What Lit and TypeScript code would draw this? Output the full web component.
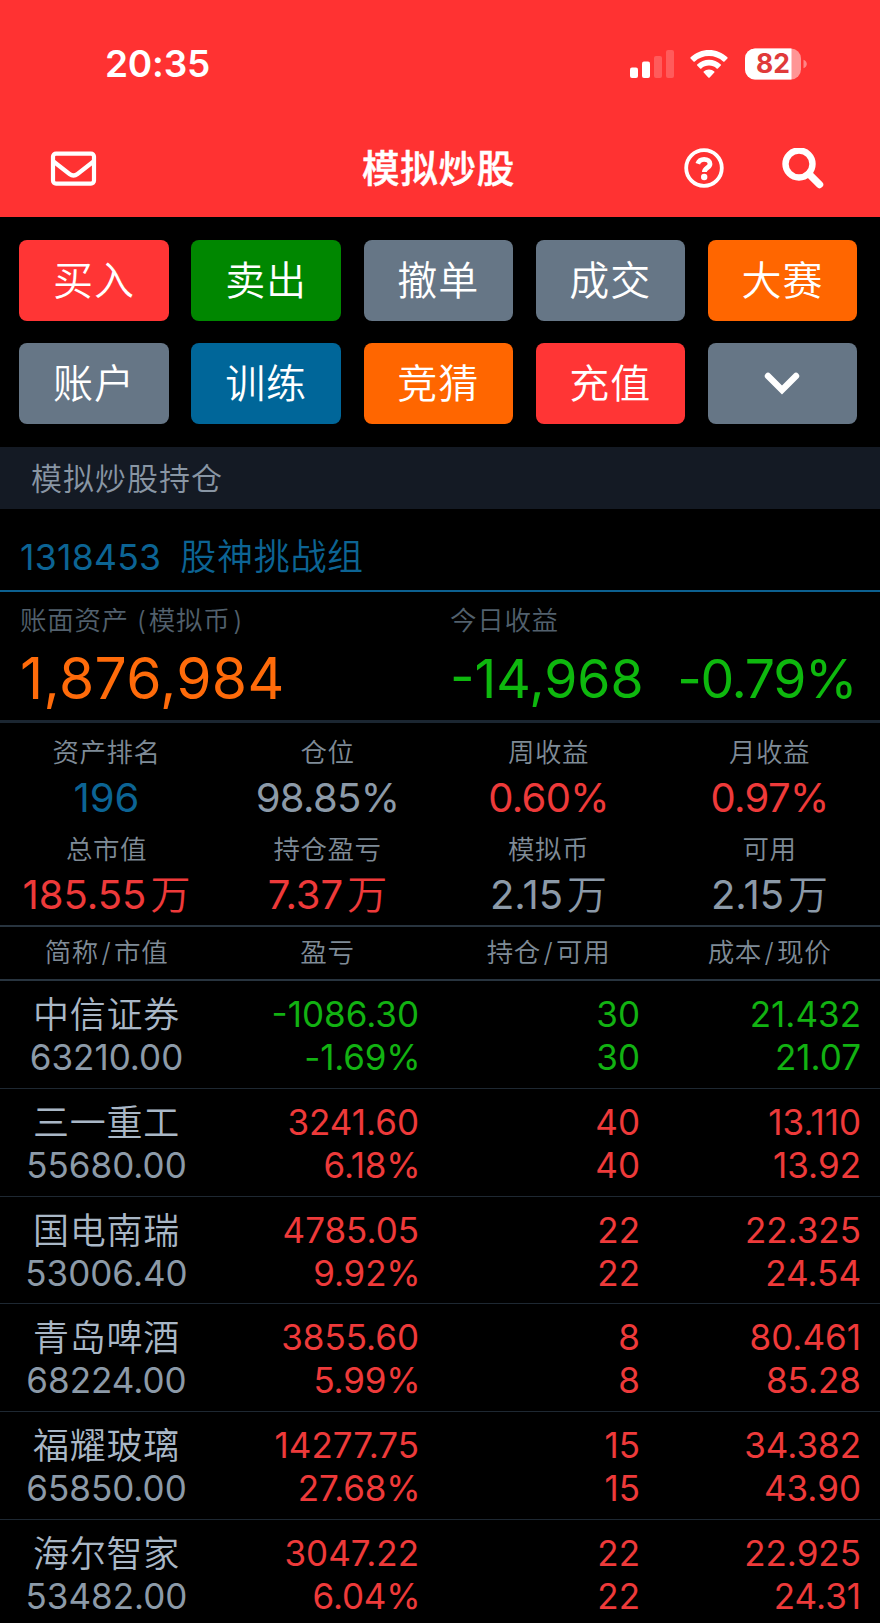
import { LitElement, html, css } from "lit";
import { customElement } from "lit/decorators.js";
import { classMap } from "lit/directives/class-map.js";

type Tone = "up" | "down" | "link" | "plain";

const actions = [
  { label: "买入", tone: "red" },
  { label: "卖出", tone: "green" },
  { label: "撤单", tone: "slate" },
  { label: "成交", tone: "slate" },
  { label: "大赛", tone: "orange" },
  { label: "账户", tone: "slate" },
  { label: "训练", tone: "blue" },
  { label: "竞猜", tone: "orange" },
  { label: "充值", tone: "red" },
  { label: "", tone: "slate" },
];

const stats: { label: string; value: string; unit?: string; tone: Tone }[] = [
  { label: "资产排名", value: "196", tone: "link" },
  { label: "仓位", value: "98.85%", tone: "plain" },
  { label: "周收益", value: "0.60%", tone: "up" },
  { label: "月收益", value: "0.97%", tone: "up" },
  { label: "总市值", value: "185.55", unit: "万", tone: "up" },
  { label: "持仓盈亏", value: "7.37", unit: "万", tone: "up" },
  { label: "模拟币", value: "2.15", unit: "万", tone: "plain" },
  { label: "可用", value: "2.15", unit: "万", tone: "plain" },
];

const columns = ["简称/市值", "盈亏", "持仓/可用", "成本/现价"];

const holdings = [
  { name: "中信证券", worth: "63210.00", gain: "-1086.30", rate: "-1.69%", held: "30", free: "30", cost: "21.432", price: "21.07" },
  { name: "三一重工", worth: "55680.00", gain: "3241.60", rate: "6.18%", held: "40", free: "40", cost: "13.110", price: "13.92" },
  { name: "国电南瑞", worth: "53006.40", gain: "4785.05", rate: "9.92%", held: "22", free: "22", cost: "22.325", price: "24.54" },
  { name: "青岛啤酒", worth: "68224.00", gain: "3855.60", rate: "5.99%", held: "8", free: "8", cost: "80.461", price: "85.28" },
  { name: "福耀玻璃", worth: "65850.00", gain: "14277.75", rate: "27.68%", held: "15", free: "15", cost: "34.382", price: "43.90" },
  { name: "海尔智家", worth: "53482.00", gain: "3047.22", rate: "6.04%", held: "22", free: "22", cost: "22.925", price: "24.31" },
];

@customElement("status-bar")
class StatusBar extends LitElement {
  static styles = css`
    :host { display: flex; align-items: center; height: 113px; padding: 7px 73px 0 105px; color: #fff; }
    .time { flex: 1; font-size: 37px; font-weight: 600; line-height: 44px; letter-spacing: -0.2px; padding-top: 1px; }
    svg { display: block; }
    .wifi { margin: 0 17px 0 15px; }
  `;
  render() {
    return html`
      <div class="time">20:35</div>
      <svg width="45" height="30" viewBox="0 0 45 30" fill="#fff">
        <rect x="0" y="18.500" width="8" height="10.500" rx="2" />
        <rect x="12" y="12.500" width="8" height="16.500" rx="2" />
        <rect x="24" y="7" width="8" height="22" rx="2" opacity=".2" />
        <rect x="36" y="1" width="8" height="28" rx="2" opacity=".2" />
      </svg>
      <svg class="wifi" width="38" height="30" viewBox="0 0 38 30" fill="#fff">
        <path d="M19 1C26 1 32.500 3.700 37.400 8.300Q38 9 37.400 9.600L34.500 12.400Q33.800 13 33.200 12.400C29.300 8.900 24.400 7 19 7S8.700 8.900 4.800 12.400Q4.200 13 3.500 12.400L.6 9.600Q0 9 .6 8.300C5.500 3.700 12 1 19 1Z" />
        <path d="M19 10.800C23.500 10.800 27.600 12.500 30.800 15.400Q31.400 16 30.800 16.600L27.900 19.400Q27.300 20 26.600 19.400C24.500 17.600 21.900 16.600 19 16.600S13.500 17.600 11.400 19.400Q10.700 20 10.100 19.400L7.200 16.600Q6.600 16 7.200 15.400C10.400 12.500 14.500 10.800 19 10.800Z" />
        <path d="M19 20.400C21 20.400 22.900 21.100 24.300 22.400Q24.900 23 24.300 23.600L19.700 28.400Q19 29.100 18.300 28.400L13.700 23.600Q13.100 23 13.700 22.400C15.100 21.100 17 20.400 19 20.400Z" />
      </svg>
      <svg width="62" height="32" viewBox="0 0 62 32">
        <clipPath id="shell"><rect x="0" y="0.500" width="56" height="31" rx="10" /></clipPath>
        <g clip-path="url(#shell)">
          <rect width="56" height="32" fill="#ff9595" />
          <rect width="46.500" height="32" fill="#fff" />
        </g>
        <path d="M58.500 11.800Q61.800 13.200 61.800 16T58.500 20.200Z" fill="#ff8585" />
        <text x="28" y="25.400" text-anchor="middle" font-size="26.500" font-weight="700" fill="#e03a3a">82</text>
      </svg>
    `;
  }
}

@customElement("nav-bar")
class NavBar extends LitElement {
  static styles = css`
    :host { display: grid; grid-template-columns: 1fr auto 1fr; align-items: center; height: 97px; padding: 0 55px 0 50px; color: #fff; box-sizing: border-box; }
    .title { font-size: 37.5px; line-height: 50px; font-weight: 500; -webkit-text-stroke: 0.5px #fff; letter-spacing: 0.8px; padding-left: 2px; }
    .tools { display: flex; justify-content: flex-end; align-items: center; gap: 57px; }
    svg { display: block; }
  `;
  render() {
    return html`
      <svg width="47" height="36" viewBox="0 0 47 36" fill="none" stroke="#fff" stroke-width="4.200" stroke-linejoin="round">
        <rect x="3" y="2.600" width="41" height="30" rx="3" />
        <path d="M3.500 10.500L19.500 23Q23.500 26 27.500 23L43.500 10.500" />
      </svg>
      <div class="title">模拟炒股</div>
      <div class="tools">
        <svg width="42" height="42" viewBox="0 0 42 42" fill="none" stroke="#fff">
          <circle cx="21" cy="20" r="17.800" stroke-width="3.800" />
          <path d="M14.800 15.800C15.800 12.700 18 11.400 21.100 11.400C24.700 11.400 27 13.300 27 16C27 20 21.400 19.600 21.400 24" stroke-width="4.800" />
          <circle cx="21.200" cy="29" r="3.200" fill="#fff" stroke="none" />
        </svg>
        <svg width="43" height="42" viewBox="0 0 43 42" fill="none" stroke="#fff">
          <circle cx="17" cy="16" r="13.500" stroke-width="6.400" />
          <path d="M27 26L37.500 36.500" stroke-width="7.400" stroke-linecap="round" />
        </svg>
      </div>
    `;
  }
}

@customElement("action-grid")
class ActionGrid extends LitElement {
  static styles = css`
    :host { display: grid; grid-template-columns: repeat(5, 1fr); grid-auto-rows: 81px; gap: 22px 22.7px; padding: 23px 22.8px 22.5px 19.3px; }
    .action { display: flex; align-items: center; justify-content: center; border-radius: 8px; color: #fff; font-size: 40px; line-height: 48px; letter-spacing: 1px; font-weight: 350; box-sizing: border-box; padding-top: 1px; }
    .red { background: #ff3535; }
    .green { background: #008700; }
    .slate { background: #667686; }
    .orange { background: #ff6600; }
    .blue { background: #006699; }
  `;
  render() {
    return actions.map(
      (a) => html`<div class=${classMap({ action: true, [a.tone]: true })}>
        ${a.label ||
        html`<svg width="36" height="24" viewBox="0 0 36 24" fill="none" stroke="#fff" stroke-width="6.400" stroke-linecap="round" stroke-linejoin="miter">
          <path d="M4 4L18 18L32 4" />
        </svg>`}
      </div>`
    );
  }
}

@customElement("asset-summary")
class AssetSummary extends LitElement {
  static styles = css`
    :host { display: block; }
    .account { display: flex; gap: 19px; height: 81px; padding: 0 20px; line-height: 97px; font-size: 36px; color: #0c6494; border-bottom: 2px solid #0c6090; box-sizing: content-box; }
    .id { font-size: 35.5px; letter-spacing: 0.3px; }
    .group { letter-spacing: 0.7px; font-weight: 350; }
    .totals { display: grid; grid-template-columns: 450px 1fr; height: 128px; border-bottom: 3px solid #1b2631; }
    .cell { padding-left: 20px; }
    .cell + .cell { padding-left: 0; }
    .caption { height: 56px; line-height: 56px; font-size: 26.5px; letter-spacing: 0.7px; color: #52606d; font-weight: 350; }
    .amount { font-size: 57px; line-height: 61px; letter-spacing: 0.3px; color: #ff6b0a; }
    .today { display: flex; gap: 33.5px; font-size: 53.5px; line-height: 61px; color: #0eb80e; }
    .rate { letter-spacing: -0.025em; }
    .open { padding: 0 2px 0 8px; }
    .close { padding-left: 3px; }
  `;
  render() {
    return html`
      <div class="account"><span class="id">1318453</span><span class="group">股神挑战组</span></div>
      <div class="totals">
        <div class="cell">
          <div class="caption">账面资产<span class="open">(</span>模拟币<span class="close">)</span></div>
          <div class="amount">1,876,984</div>
        </div>
        <div class="cell">
          <div class="caption">今日收益</div>
          <div class="today"><span>-14,968</span><span class="rate">-0.79%</span></div>
        </div>
      </div>
    `;
  }
}

@customElement("stat-grid")
class StatGrid extends LitElement {
  static styles = css`
    :host { display: grid; grid-template-columns: 217px 1fr 1fr 1fr; grid-auto-rows: 97px; height: 204px; border-bottom: 2px solid #28343f; box-sizing: border-box; padding-top: 6px; text-align: center; }
    .stat:nth-child(4n + 1) { padding-right: 4px; }
    .label { height: 46px; line-height: 46px; font-size: 26.5px; letter-spacing: 0.5px; color: #7f8b97; font-weight: 350; }
    .value { line-height: 45px; font-size: 40px; white-space: nowrap; }
    .rate { letter-spacing: -0.017em; }
    .unit { margin-left: 4px; font-weight: 350; }
    .up { color: #ee3a3a; }
    .link { color: #0c6494; }
    .plain { color: #8c9aa8; }
  `;
  render() {
    return stats.map(
      (s) => html`<div class="stat">
        <div class="label">${s.label}</div>
        <div class=${classMap({ value: true, rate: s.value.endsWith("%"), [s.tone]: true })}>${s.value}${s.unit ? html`<span class="unit">${s.unit}</span>` : ""}</div>
      </div>`
    );
  }
}

@customElement("holding-table")
class HoldingTable extends LitElement {
  static styles = css`
    :host { display: block; }
    .head, .row { display: grid; grid-template-columns: 217px 1fr 1fr 1fr; }
    .head { height: 52px; line-height: 51px; font-size: 26.5px; letter-spacing: 0.7px; text-align: center; color: #7f8b97; border-bottom: 2px solid #28343f; font-weight: 350; }
    .head span:first-child { padding-right: 4px; }
    .head .slash:first-child, .slash { padding: 0 2.5px; }
    .row { height: 107.800px; box-sizing: border-box; padding-top: 12px; border-bottom: 1px solid #1e2832; font-size: 35px; line-height: 43px; text-align: right; }
    .pair { padding-right: 19px; }
    .rate { letter-spacing: -0.005em; margin-right: -1.5px; }
    .title { text-align: center; padding-right: 4px; color: #8c9aa8; }
    .name { font-size: 36px; letter-spacing: 0.7px; color: #a9b7c6; height: 43px; line-height: 45px; font-weight: 350; }
    .up { color: #ee3a3a; }
    .down { color: #12b212; }
  `;
  render() {
    return html`
      <div class="head">
        ${columns.map((c) => {
          const [a, b] = c.split("/");
          return html`<span>${a}${b ? html`<span class="slash">/</span>${b}` : ""}</span>`;
        })}
      </div>
      ${holdings.map((h) => {
        const down = h.gain.startsWith("-");
        const pair = classMap({ pair: true, down, up: !down });
        return html`<div class="row">
          <div class="title"><div class="name">${h.name}</div><div>${h.worth}</div></div>
          <div class=${pair}><div>${h.gain}</div><div class="rate">${h.rate}</div></div>
          <div class=${pair}><div>${h.held}</div><div>${h.free}</div></div>
          <div class=${pair}><div>${h.cost}</div><div>${h.price}</div></div>
        </div>`;
      })}
    `;
  }
}

@customElement("app-root")
class AppRoot extends LitElement {
  static styles = css`
    :host { display: block; width: 880px; height: 1623px; overflow: hidden; background: #000; font-family: Inter, "Noto Sans CJK SC", sans-serif; font-weight: 400; }
    .top { background: #ff3232; height: 217px; }
    .section { height: 62.500px; line-height: 63px; padding-left: 31px; background: #141a24; color: #8996a4; font-size: 31px; letter-spacing: 1px; font-weight: 350; }
  `;
  render() {
    return html`
      <div class="top"><status-bar></status-bar><nav-bar></nav-bar></div>
      <action-grid></action-grid>
      <div class="section">模拟炒股持仓</div>
      <asset-summary></asset-summary>
      <stat-grid></stat-grid>
      <holding-table></holding-table>
    `;
  }
}
